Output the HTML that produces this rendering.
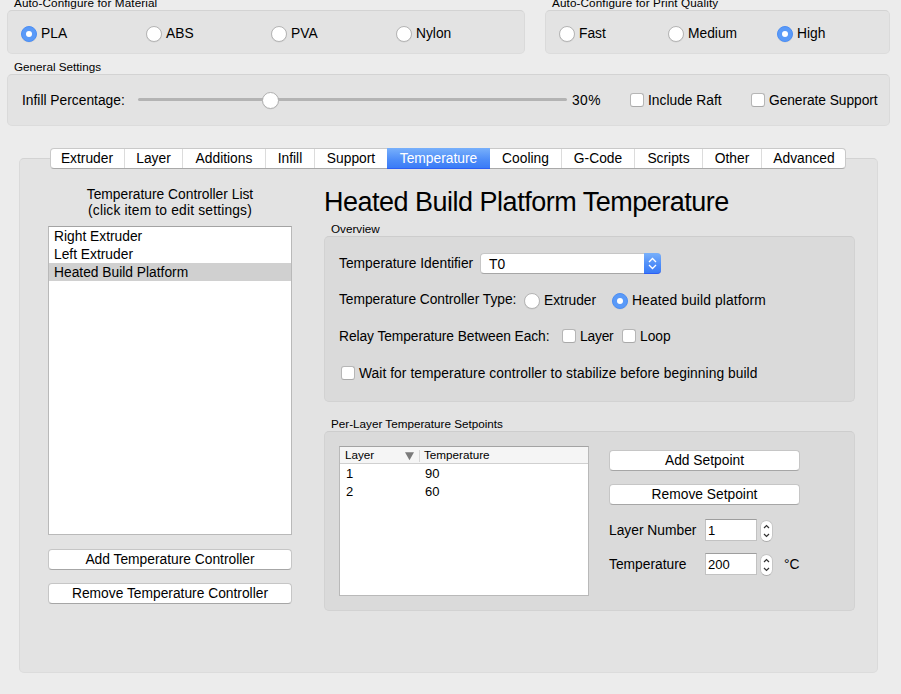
<!DOCTYPE html>
<html><head><meta charset="utf-8">
<style>
html,body{margin:0;padding:0}
body{width:901px;height:694px;overflow:hidden;background:#ececec;position:relative;font-family:"Liberation Sans",sans-serif;color:#000}
.a{position:absolute}
.t{position:absolute;font-size:13.8px;line-height:16px;white-space:nowrap}
.s{position:absolute;font-size:11.7px;line-height:14px;white-space:nowrap}
.box{position:absolute;box-sizing:border-box;background:#e3e3e3;border:1px solid #dadada;border-top-color:#d3d3d3;border-bottom-color:#dcdcdc;border-radius:5px}
.box2{position:absolute;box-sizing:border-box;background:#dadada;border:1px solid #d2d2d2;border-top-color:#cdcdcd;border-radius:5px}
.radio{position:absolute;box-sizing:border-box;width:16px;height:16px;border-radius:50%;background:#fff;border:1px solid #b4b4b4;box-shadow:0 0.5px 0.5px rgba(0,0,0,0.08)}
.radio.on{background:#5a9af8;border-color:#4b8ef5}
.radio.on::after{content:"";position:absolute;left:4px;top:4px;width:6px;height:6px;border-radius:50%;background:#fff}
.chk{position:absolute;box-sizing:border-box;width:14px;height:14px;border-radius:3px;background:#fff;border:1px solid #b6b6b6;border-bottom-color:#a9a9a9}
.btn{position:absolute;box-sizing:border-box;background:#fff;border:1px solid #c6c6c6;border-bottom-color:#a6a6a6;border-radius:4px;font-size:13.8px;line-height:16px;text-align:center;white-space:nowrap}
.field{position:absolute;box-sizing:border-box;background:#fff;border:1px solid #c2c2c2;border-top-color:#9e9e9e}
</style></head><body>

<!-- Auto-Configure for Material -->
<div class="s" style="left:14px;top:-4px;letter-spacing:0.11px">Auto-Configure for Material</div>
<div class="box" style="left:7px;top:10px;width:518px;height:44px"></div>
<div class="radio on" style="left:21px;top:26px"></div><div class="t" style="left:41px;top:26px">PLA</div>
<div class="radio" style="left:146px;top:26px"></div><div class="t" style="left:166px;top:26px">ABS</div>
<div class="radio" style="left:271px;top:26px"></div><div class="t" style="left:291px;top:26px">PVA</div>
<div class="radio" style="left:396px;top:26px"></div><div class="t" style="left:416px;top:26px">Nylon</div>

<!-- Auto-Configure for Print Quality -->
<div class="s" style="left:552px;top:-4px;letter-spacing:0.12px">Auto-Configure for Print Quality</div>
<div class="box" style="left:545px;top:10px;width:345px;height:44px"></div>
<div class="radio" style="left:559px;top:26px"></div><div class="t" style="left:579px;top:26px">Fast</div>
<div class="radio" style="left:668px;top:26px"></div><div class="t" style="left:688px;top:26px">Medium</div>
<div class="radio on" style="left:777px;top:26px"></div><div class="t" style="left:797px;top:26px">High</div>

<!-- General Settings -->
<div class="s" style="left:14px;top:60px">General Settings</div>
<div class="box" style="left:7px;top:74px;width:883px;height:52px"></div>
<div class="t" style="left:22px;top:93px">Infill Percentage:</div>
<div class="a" style="left:138px;top:98px;width:429px;height:3px;border-radius:2px;background:#b3b3b3"></div>
<div class="radio" style="left:262px;top:92px;width:17px;height:17px;border-color:#b0b0b0"></div>
<div class="t" style="left:572px;top:93px;letter-spacing:0.4px">30%</div>
<div class="chk" style="left:630px;top:93px"></div><div class="t" style="left:648px;top:93px">Include Raft</div>
<div class="chk" style="left:751px;top:93px"></div><div class="t" style="left:769px;top:93px;letter-spacing:-0.07px">Generate Support</div>

<!-- Tab view -->
<div class="box" style="left:19px;top:158px;width:859px;height:515px"></div>

<!-- Tabs -->
<div class="a" style="left:50px;top:148px;width:796px;height:21px;box-sizing:border-box;background:#fff;border:1px solid #c9c9c9;border-bottom-color:#a9a9a9;border-radius:4px"></div>
<div class="a" style="left:50px;top:149px;width:74px;height:19px;box-sizing:border-box;text-align:center;font-size:13.8px;line-height:16px;padding-top:2px">Extruder</div>
<div class="a" style="left:124px;top:149px;width:58px;height:19px;box-sizing:border-box;border-left:1px solid #dcdcdc;text-align:center;font-size:13.8px;line-height:16px;padding-top:2px">Layer</div>
<div class="a" style="left:182px;top:149px;width:83px;height:19px;box-sizing:border-box;border-left:1px solid #dcdcdc;text-align:center;font-size:13.8px;line-height:16px;padding-top:2px">Additions</div>
<div class="a" style="left:265px;top:149px;width:49px;height:19px;box-sizing:border-box;border-left:1px solid #dcdcdc;text-align:center;font-size:13.8px;line-height:16px;padding-top:2px">Infill</div>
<div class="a" style="left:314px;top:149px;width:73px;height:19px;box-sizing:border-box;border-left:1px solid #dcdcdc;text-align:center;font-size:13.8px;line-height:16px;padding-top:2px">Support</div>
<div class="a" style="left:387px;top:148px;width:103px;height:21px;background:linear-gradient(#78b0fb,#4d8cf8 60%,#3a7bf7);border-bottom:1px solid #2d5ef3;box-sizing:border-box;color:#fff;text-align:center;font-size:13.8px;line-height:16px;padding-top:3px">Temperature</div>
<div class="a" style="left:490px;top:149px;width:71px;height:19px;box-sizing:border-box;text-align:center;font-size:13.8px;line-height:16px;padding-top:2px">Cooling</div>
<div class="a" style="left:561px;top:149px;width:73px;height:19px;box-sizing:border-box;border-left:1px solid #dcdcdc;text-align:center;font-size:13.8px;line-height:16px;padding-top:2px">G-Code</div>
<div class="a" style="left:634px;top:149px;width:68px;height:19px;box-sizing:border-box;border-left:1px solid #dcdcdc;text-align:center;font-size:13.8px;line-height:16px;padding-top:2px">Scripts</div>
<div class="a" style="left:702px;top:149px;width:59px;height:19px;box-sizing:border-box;border-left:1px solid #dcdcdc;text-align:center;font-size:13.8px;line-height:16px;padding-top:2px">Other</div>
<div class="a" style="left:761px;top:149px;width:85px;height:19px;box-sizing:border-box;border-left:1px solid #dcdcdc;text-align:center;font-size:13.8px;line-height:16px;padding-top:2px">Advanced</div>

<!-- Left column -->
<div class="t" style="left:48px;top:187px;width:244px;text-align:center">Temperature Controller List</div>
<div class="t" style="left:48px;top:203px;width:244px;text-align:center;letter-spacing:0.18px">(click item to edit settings)</div>
<div class="a" style="left:48px;top:226px;width:244px;height:309px;box-sizing:border-box;background:#fff;border:1px solid #b9b9b9;border-top-color:#a3a3a3"></div>
<div class="t" style="left:54px;top:229px">Right Extruder</div>
<div class="t" style="left:54px;top:247px">Left Extruder</div>
<div class="a" style="left:49px;top:263px;width:242px;height:18px;background:#d0d0d0"></div>
<div class="t" style="left:54px;top:265px">Heated Build Platform</div>
<div class="btn" style="left:48px;top:549px;width:244px;height:21px;padding-top:2px">Add Temperature Controller</div>
<div class="btn" style="left:48px;top:583px;width:244px;height:21px;padding-top:2px">Remove Temperature Controller</div>

<!-- Right column -->
<div class="a" style="left:324px;top:187px;font-size:27px;line-height:30px;white-space:nowrap;letter-spacing:-0.5px">Heated Build Platform Temperature</div>
<div class="s" style="left:331px;top:222px">Overview</div>
<div class="box2" style="left:324px;top:236px;width:531px;height:166px"></div>
<div class="t" style="left:339px;top:256px">Temperature Identifier</div>
<div class="a" style="left:480px;top:253px;width:181px;height:21px;box-sizing:border-box;background:#fff;border:1px solid #c6c6c6;border-bottom-color:#a6a6a6;border-radius:4px"></div>
<div class="t" style="left:489px;top:257px">T0</div>
<div class="a" style="left:644px;top:253px;width:17px;height:21px;background:linear-gradient(#78b0fb,#4d8cf8 60%,#3a7bf7);border-bottom:1px solid #2d5ef3;box-sizing:border-box;border-radius:0 4px 4px 0">
  <svg class="a" style="left:0;top:0" width="17" height="21" viewBox="0 0 17 21"><path d="M5 9 L8.5 5.5 L12 9 M5 12 L8.5 15.5 L12 12" fill="none" stroke="#fff" stroke-width="1.3"/></svg>
</div>
<div class="t" style="left:339px;top:292px;letter-spacing:-0.04px">Temperature Controller Type:</div>
<div class="radio" style="left:524px;top:293px"></div><div class="t" style="left:544px;top:293px">Extruder</div>
<div class="radio on" style="left:612px;top:293px"></div><div class="t" style="left:632px;top:293px;letter-spacing:0.13px">Heated build platform</div>
<div class="t" style="left:339px;top:329px;letter-spacing:-0.08px">Relay Temperature Between Each:</div>
<div class="chk" style="left:562px;top:329px"></div><div class="t" style="left:580px;top:329px;letter-spacing:-0.2px">Layer</div>
<div class="chk" style="left:622px;top:329px"></div><div class="t" style="left:640px;top:329px">Loop</div>
<div class="chk" style="left:341px;top:366px"></div><div class="t" style="left:359px;top:366px;letter-spacing:0.06px">Wait for temperature controller to stabilize before beginning build</div>

<div class="s" style="left:331px;top:417px">Per-Layer Temperature Setpoints</div>
<div class="box2" style="left:324px;top:431px;width:531px;height:180px"></div>
<div class="a" style="left:339px;top:446px;width:250px;height:150px;box-sizing:border-box;background:#fff;border:1px solid #b9b9b9;border-top-color:#a3a3a3">
  <div class="a" style="left:0;top:0;width:248px;height:16px;background:#f5f5f5;border-bottom:1px solid #d0d0d0"></div>
  <div class="a" style="left:79px;top:3px;width:1px;height:12px;background:#d8d8d8"></div>
  <svg class="a" style="left:65px;top:5px" width="9" height="9" viewBox="0 0 9 9"><path d="M0 0.3 H9 L4.5 8.2 Z" fill="#7a7a7a"/></svg>
  <div class="s" style="left:5px;top:1px">Layer</div>
  <div class="s" style="left:84px;top:1px">Temperature</div>
  <div class="t" style="left:6px;top:19px;font-size:13px">1</div>
  <div class="t" style="left:85px;top:19px;font-size:13px">90</div>
  <div class="t" style="left:6px;top:37px;font-size:13px">2</div>
  <div class="t" style="left:85px;top:37px;font-size:13px">60</div>
</div>
<div class="btn" style="left:609px;top:450px;width:191px;height:21px;padding-top:2px">Add Setpoint</div>
<div class="btn" style="left:609px;top:484px;width:191px;height:21px;padding-top:2px">Remove Setpoint</div>
<div class="t" style="left:609px;top:523px">Layer Number</div>
<div class="field" style="left:705px;top:519px;width:52px;height:22px"><div class="t" style="left:2px;top:3px;font-size:13px">1</div></div>
<div class="a" style="left:760px;top:520px;width:13px;height:22px;box-sizing:border-box;background:#fff;border:1px solid #c6c6c6;border-bottom-color:#a9a9a9;border-radius:6.5px">
  <svg class="a" style="left:0;top:0" width="11" height="20" viewBox="0 0 11 20"><path d="M3 7 L5.5 4.5 L8 7 M3 13 L5.5 15.5 L8 13" fill="none" stroke="#333" stroke-width="1.2"/></svg>
</div>
<div class="t" style="left:609px;top:557px">Temperature</div>
<div class="field" style="left:705px;top:553px;width:52px;height:22px"><div class="t" style="left:2px;top:3px;font-size:13px">200</div></div>
<div class="a" style="left:760px;top:554px;width:13px;height:22px;box-sizing:border-box;background:#fff;border:1px solid #c6c6c6;border-bottom-color:#a9a9a9;border-radius:6.5px">
  <svg class="a" style="left:0;top:0" width="11" height="20" viewBox="0 0 11 20"><path d="M3 7 L5.5 4.5 L8 7 M3 13 L5.5 15.5 L8 13" fill="none" stroke="#333" stroke-width="1.2"/></svg>
</div>
<div class="t" style="left:784px;top:557px">°C</div>

</body></html>
